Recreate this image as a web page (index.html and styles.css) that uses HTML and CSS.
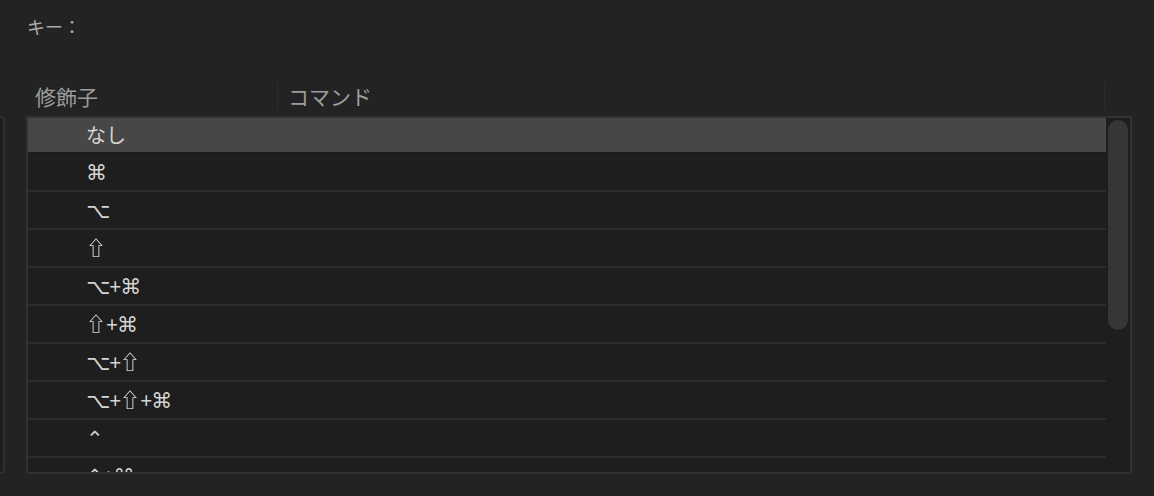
FILE: index.html
```html
<!DOCTYPE html>
<html lang="ja">
<head>
<meta charset="utf-8">
<link rel="stylesheet" href="styles.css">
</head>
<body>
<div class="page">
  <div class="key-label">キー：</div>
  <div class="panels">
    <div class="side-panel"></div>
    <div class="table-wrap">
      <div class="table-head">
        <div class="col col-mod">修飾子</div>
        <div class="col col-cmd">コマンド</div>
        <div class="col col-end"></div>
      </div>
      <div class="table-frame">
        <div class="rows">
          <div class="row selected"><span class="jp">なし</span></div>
          <div class="row"><span class="sym">⌘</span></div>
          <div class="row"><span class="sym">⌥</span></div>
          <div class="row"><span class="sym"><span class="shift">⇧</span></span></div>
          <div class="row"><span class="sym">⌥+⌘</span></div>
          <div class="row"><span class="sym"><span class="shift">⇧</span>+⌘</span></div>
          <div class="row"><span class="sym">⌥+<span class="shift">⇧</span></span></div>
          <div class="row"><span class="sym">⌥+<span class="shift">⇧</span>+⌘</span></div>
          <div class="row"><span class="sym">⌃</span></div>
          <div class="row"><span class="sym">⌃+⌘</span></div>
        </div>
        <div class="scrollbar"><div class="thumb"></div></div>
      </div>
    </div>
  </div>
</div>
</body>
</html>
```
FILE: styles.css
```css
html, body {
  margin: 0;
  padding: 0;
  background: #232323;
  height: 100%;
  overflow: hidden;
}
.page {
  width: 1154px;
  height: 496px;
  font-family: "Noto Sans CJK JP", "DejaVu Sans", sans-serif;
  color: #a6a6a6;
}
.key-label {
  padding: 13px 0 0 27px;
  height: 27px;
  font-size: 18px;
  line-height: 27px;
  color: #a8a8a8;
}
.panels {
  display: flex;
  margin-top: 42px;
}
.side-panel {
  width: 3px;
  margin-top: 34px;
  height: 354px;
  border: 2px solid #303030;
  border-left: none;
  border-radius: 0 4px 4px 0;
  background: #1e1e1e;
}
.table-wrap {
  margin-left: 21px;
  width: 1106px;
}
.table-head {
  display: flex;
  height: 28px;
  align-items: stretch;
  margin-bottom: 6px;
}
.col {
  font-size: 21px;
  line-height: 28px;
  color: #9c9c9c;
}
.col-mod {
  width: 242px;
  padding-left: 9px;
  border-right: 1px solid #2c2c2c;
}
.col-cmd {
  width: 816px;
  padding-left: 10px;
  border-right: 1px solid #2c2c2c;
}
.col-end {
  flex: 1;
}
.table-frame {
  display: flex;
  height: 354px;
  border: 2px solid #323232;
  border-radius: 0 0 3px 3px;
  background: #1e1e1e;
  overflow: hidden;
}
.rows {
  width: 1078px;
  margin-top: -2px;
}
.row {
  height: 36px;
  border-bottom: 2px solid #2d2d2d;
  padding-left: 58px;
  display: flex;
  align-items: center;
  color: #d4d4d4;
}
.row.selected {
  background: #474747;
  border-bottom-color: #1b1b1b;
}
.jp {
  font-size: 20px;
}
.sym {
  font-family: "Noto Sans", "DejaVu Sans", sans-serif;
  font-size: 21px;
  line-height: 24px;
  letter-spacing: -1px;
}
.shift {
  display: inline-block;
  font-family: "Noto Sans CJK JP", sans-serif;
  font-size: 20px;
  font-weight: 700;
  letter-spacing: 0;
  color: #d4d4d4;
  will-change: transform;
}
.scrollbar {
  flex: 1;
  padding: 2px 2px 0 2px;
}
.thumb {
  height: 210px;
  border-radius: 10px;
  background: #363636;
}
```
